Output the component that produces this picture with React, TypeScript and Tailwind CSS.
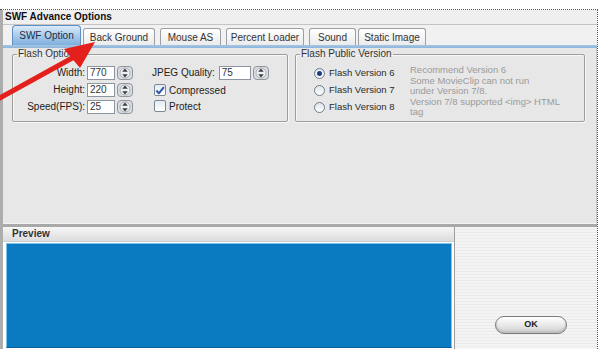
import React from "react";

function Spinner() {
  return (
    <svg width="16" height="14" viewBox="0 0 16 14" className="shrink-0">
      <rect x="0.5" y="0.5" width="15" height="13" rx="3.5" fill="#d9dde3" stroke="#8f959c" />
      <circle cx="8" cy="7" r="5" fill="#eef0f2" stroke="#9aa0a6" strokeWidth="0.8" />
      <path d="M8 2.6 L10.8 5.8 H5.2 Z" fill="#3a3f45" />
      <path d="M8 11.4 L10.8 8.2 H5.2 Z" fill="#3a3f45" />
    </svg>
  );
}

function NumField({ value, width }: { value: string; width: string }) {
  return (
    <div className="flex items-center gap-[2px]">
      <div
        className={`${width} h-[14px] bg-white border border-[#8d96a0] pl-[2px] text-[10px] leading-[12px] text-[#333]`}
      >
        {value}
      </div>
      <Spinner />
    </div>
  );
}

function Check({ checked, label }: { checked?: boolean; label: string }) {
  return (
    <div className="flex items-center gap-[3px] h-[14px]">
      <div className="w-[12px] h-[12px] rounded-[2px] border border-[#7c8794] bg-gradient-to-b from-[#e6ebf1] to-[#ffffff] flex items-center justify-center">
        {checked && (
          <svg width="11" height="11" viewBox="0 0 11 11">
            <path d="M1.5 5.5 L4.2 8.6 L9.8 1.8" fill="none" stroke="#2b5aa8" strokeWidth="2.2" strokeLinejoin="round" />
          </svg>
        )}
      </div>
      <span>{label}</span>
    </div>
  );
}

function Radio({ checked, label }: { checked?: boolean; label: string }) {
  return (
    <div className="flex items-center gap-[4px] h-[13px]">
      <div className="w-[11px] h-[11px] rounded-full border border-[#6f7b88] bg-gradient-to-b from-[#dfe5ec] to-[#ffffff] flex items-center justify-center">
        {checked && <div className="w-[5px] h-[5px] rounded-full bg-[#1d3e7e]" />}
      </div>
      <span className="text-[9.5px] text-[#2a2a2a]">{label}</span>
    </div>
  );
}

function Tab({ label, width, active }: { label: string; width: string; active?: boolean }) {
  if (active) {
    return (
      <div
        className={`${width} h-[20px] rounded-t-[4px] border border-b-0 border-[#5d8fc2] bg-gradient-to-b from-[#dcebf8] via-[#a9cbec] to-[#7fb0df] flex items-center justify-center text-[#1b2f4a]`}
      >
        {label}
      </div>
    );
  }
  return (
    <div
      className={`${width} h-[17px] rounded-t-[3px] border border-b-0 border-[#9aa0a4] bg-gradient-to-b from-[#ffffff] to-[#ebebeb] flex items-center justify-center text-[#333]`}
    >
      {label}
    </div>
  );
}

export default function App() {
  return (
    <div className="relative w-[601px] h-[353px] overflow-hidden bg-white pt-[9px] font-['Liberation_Sans',Arial,sans-serif] text-[10px] text-[#222]">
      <div className="w-[598px] border-t border-r border-dotted border-[#555] flex flex-col">
        <div className="flex flex-col border-l-[3px] border-[#adadad]">
          <div className="h-[15px] bg-[#efefef] border-b border-[#c4c4c4] pl-[2px] font-bold text-[10px] leading-[14px] text-[#111]">
            SWF Advance Options
          </div>

          <div className="h-[20px] bg-[#f1f1f1] flex items-end pl-[9px] gap-[2px]">
            <Tab label="SWF Option" width="w-[69px]" active />
            <Tab label="Back Ground" width="w-[72px]" />
            <div className="w-[1px]" />
            <Tab label="Mouse AS" width="w-[61px]" />
            <div className="w-[1px]" />
            <Tab label="Percent Loader" width="w-[78px]" />
            <div className="w-[1px]" />
            <Tab label="Sound" width="w-[47px]" />
            <Tab label="Static Image" width="w-[68px]" />
          </div>
          <div className="h-[3px] bg-gradient-to-b from-[#a6c6e3] to-[#8db5da]" />

          <div className="h-[176px] bg-[#e7e7e7] border-b border-[#f4f4f4] border-r border-r-[#c8c8c8] flex items-start gap-[7px] pl-[9px] pt-[1px]">
            <fieldset className="w-[276px] h-[73px] border border-[#9d9d9d] rounded-[2px] shadow-[inset_1px_1px_0_#f7f7f7,1px_1px_0_#f7f7f7] px-[2px]">
              <legend className="ml-[2px] px-[1px] text-[10px] leading-[10px] text-[#333]">Flash Options</legend>
              <div className="flex mt-[6px]">
                <div className="flex flex-col gap-[2px]">
                  <div className="flex items-center gap-[2px]">
                    <span className="w-[70px] text-right">Width:</span>
                    <NumField value="770" width="w-[28px]" />
                  </div>
                  <div className="flex items-center gap-[2px]">
                    <span className="w-[70px] text-right">Height:</span>
                    <NumField value="220" width="w-[28px]" />
                  </div>
                  <div className="flex items-center gap-[2px]">
                    <span className="w-[70px] text-right">Speed(FPS):</span>
                    <NumField value="25" width="w-[28px]" />
                  </div>
                </div>
                <div className="flex flex-col gap-[2px] ml-[19px]">
                  <div className="flex items-center gap-[4px]">
                    <span>JPEG Quality:</span>
                    <NumField value="75" width="w-[32px]" />
                  </div>
                  <div className="pl-[2px] mt-[1px]">
                    <Check checked label="Compressed" />
                  </div>
                  <div className="pl-[2px]">
                    <Check label="Protect" />
                  </div>
                </div>
              </div>
            </fieldset>

            <fieldset className="w-[290px] h-[73px] border border-[#9d9d9d] rounded-[2px] shadow-[inset_1px_1px_0_#f7f7f7,1px_1px_0_#f7f7f7] px-[2px]">
              <legend className="ml-[2px] px-[1px] text-[10px] leading-[10px] text-[#333]">Flash Public Version</legend>
              <div className="flex pl-[16px] mt-[5px]">
                <div className="flex flex-col gap-[4px] pt-[3px] w-[96px]">
                  <Radio checked label="Flash Version 6" />
                  <Radio label="Flash Version 7" />
                  <Radio label="Flash Version 8" />
                </div>
                <div className="text-[9.5px] leading-[10.5px] text-[#9a9a9a] w-[160px] mt-[1px]">
                  Recommend Version 6
                  <br />
                  Some MovieClip can not run
                  <br />
                  under Version 7/8.
                  <br />
                  Version 7/8 supported &lt;img&gt; HTML
                  <br />
                  tag
                </div>
              </div>
            </fieldset>
          </div>
          <div className="h-[3px] bg-[#a9a9a9]" />

          <div className="h-[122px] flex">
            <div className="w-[452px] flex flex-col border-r border-[#9e9e9e]">
              <div className="h-[15px] bg-gradient-to-b from-[#f6f6f6] to-[#dcdcdc] border-b border-[#cfcfcf] pl-[9px] text-[10px] leading-[14px] font-semibold text-[#333]">
                Preview
              </div>
              <div className="ml-[3px] mt-[1px] w-[446px] h-[105px] bg-[#0a7bc0] border border-[#7cc4ee] border-b-[#0b5f98]" />
            </div>
            <div className="flex-1 bg-[repeating-linear-gradient(180deg,#f4f4f4_0px,#f4f4f4_2px,#ebebeb_2px,#ebebeb_3px)] pl-[40px] pt-[89px]">
              <div className="w-[72px] h-[18px] rounded-full border border-[#7a7a7a] bg-gradient-to-b from-[#ffffff] via-[#e9e9e9] to-[#cfcfcf] shadow-[inset_0_-2px_2px_#bdbdbd] flex items-center justify-center text-[9px] font-bold text-[#222]">
                OK
              </div>
            </div>
          </div>
        </div>
      </div>

      <svg className="absolute left-0 top-0" width="110" height="110" viewBox="0 0 110 110">
        <path d="M-4 100 L74 57" stroke="#e3201b" strokeWidth="5" strokeLinecap="butt" />
        <path d="M95 42 L64 49 L80 68 Z" fill="#e3201b" />
      </svg>
    </div>
  );
}
